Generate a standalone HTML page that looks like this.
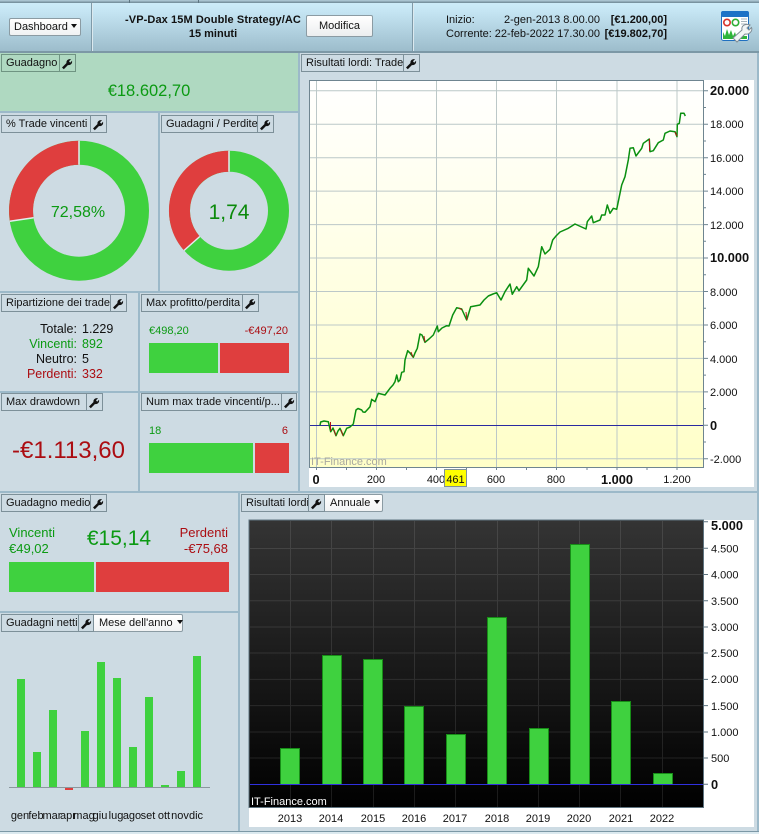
<!DOCTYPE html>
<html><head><meta charset="utf-8">
<style>
html,body{margin:0;padding:0}
body{width:759px;height:834px;overflow:hidden;position:relative;background:#cddbe3;font-family:"Liberation Sans",Arial,sans-serif;font-size:11px;color:#111}
.a{position:absolute;box-sizing:border-box}
.sep{position:absolute;background:#9cb9c9}
.tab{position:absolute;height:18px;display:flex;font-size:11px;line-height:16px;color:#111}
.tab b{font-weight:normal;display:block;border:1px solid #7d9099;padding:0 2px 0 4px;white-space:nowrap;box-sizing:border-box;height:18px;overflow:hidden}
.tab i{display:block;width:16px;height:18px;border:1px solid #7d9099;border-left:0;box-sizing:border-box;position:relative}
.tab i svg{position:absolute;left:1px;top:2px}
.dd{display:block;height:18px;box-sizing:border-box;border:1px solid #8b9ba3;border-left:0;border-radius:0 2px 2px 0;background:linear-gradient(#fff,#f1f3f4);padding:0 3px 0 5px;line-height:16px;white-space:nowrap}
.ar{display:inline-block;width:0;height:0;border:3.5px solid transparent;border-top:4px solid #111;border-bottom:0;margin-left:4px;vertical-align:2px}
.t{position:absolute;white-space:nowrap;line-height:16px;height:16px}
.g{color:#0b9a12}.r{color:#ab0d12}
svg text{font-family:"Liberation Sans",Arial,sans-serif;font-size:11px;fill:#111}
svg .b{font-weight:bold;font-size:12.800px}
</style></head><body>

<!-- top bar -->
<div class="a" style="left:0;top:0;width:759px;height:53px;background:linear-gradient(#d0eefb,#c6e6f4 20%,#9dbdcc);border-bottom:2px solid #7c98a6"></div>
<div class="a" style="left:0;top:0;width:759px;height:3px;background:linear-gradient(#b5cfdc,#6d8794)"></div>
<div class="a" style="left:129px;top:0;width:1px;height:3px;background:#5c7480"></div>
<div class="a" style="left:198px;top:0;width:1px;height:3px;background:#5c7480"></div>
<div class="a" style="left:91px;top:3px;width:2px;height:48px;background:#dbe9ef;border-left:1px solid #7f9aa8"></div>
<div class="a" style="left:412px;top:3px;width:2px;height:48px;background:#dbe9ef;border-left:1px solid #7f9aa8"></div>
<div class="a" style="left:9px;top:18px;width:72px;height:18px;border:1px solid #8b9ba3;border-radius:2px;background:linear-gradient(#fff,#f0f2f3);font-size:11px;line-height:16px;padding-left:4px;white-space:nowrap">Dashboard<span class="ar" style="margin-left:3px"></span></div>
<div class="t" style="left:100px;top:12px;width:226px;text-align:center;font-weight:bold;font-size:11px;letter-spacing:.1px">-VP-Dax 15M Double Strategy/AC</div>
<div class="t" style="left:100px;top:26px;width:226px;text-align:center;font-weight:bold;font-size:11px;">15 minuti</div>
<div class="a" style="left:306px;top:15px;width:67px;height:22px;border:1px solid #8b9ba3;border-radius:2px;background:linear-gradient(#fff,#eceeef);text-align:center;line-height:20px;font-size:11px">Modifica</div>
<div class="t" style="left:446px;top:12px;font-size:11px">Inizio:</div>
<div class="t" style="left:446px;top:26px;font-size:11px">Corrente:</div>
<div class="t" style="left:480px;width:120px;text-align:right;top:12px;font-size:11px">2-gen-2013 8.00.00</div>
<div class="t" style="left:480px;width:120px;text-align:right;top:26px;font-size:11px">22-feb-2022 17.30.00</div>
<div class="t" style="left:600px;width:67px;text-align:right;top:12px;font-size:11px;font-weight:bold">[€1.200,00]</div>
<div class="t" style="left:600px;width:67px;text-align:right;top:26px;font-size:11px;font-weight:bold">[€19.802,70]</div>
<svg class="a" style="left:720px;top:10px" width="34" height="33" viewBox="0 0 34 33">
<rect x="1.500" y="1.500" width="27" height="29" rx="2" fill="#fff" stroke="#1f6fc0"/>
<rect x="1" y="1" width="28" height="6" rx="2" fill="#1d72c6"/>
<circle cx="7" cy="12.500" r="3.200" fill="none" stroke="#d8342c" stroke-width="1.600"/>
<circle cx="15.500" cy="12.500" r="3.200" fill="none" stroke="#2fae35" stroke-width="1.600"/>
<path d="M21 9h6M21 11.500h6M21 14h6" stroke="#a8b4bc"/>
<path d="M3 29V22L5 26 7 19 9 25 11 20 13 26 15 22 17 29Z M21 29V26H27V29Z" fill="#2fb53a"/>
<path d="M13 28 L22 20 C21 16 25 13 30 15 L27 18 L29 20 L31.500 17.500 C33 21 29 25 25 24 L17 32 Z" fill="#f2f5f6" stroke="#7f8c94"/>
</svg>

<!-- panel backgrounds -->
<div class="a" style="left:0;top:53px;width:298px;height:58px;background:#afd9c1"></div>
<div class="sep" style="left:298px;top:53px;width:2px;height:438px"></div>
<div class="sep" style="left:0;top:111px;width:298px;height:2px"></div>
<div class="sep" style="left:158px;top:113px;width:2px;height:178px"></div>
<div class="sep" style="left:0;top:291px;width:298px;height:2px"></div>
<div class="sep" style="left:138px;top:293px;width:2px;height:198px"></div>
<div class="sep" style="left:0;top:391px;width:298px;height:2px"></div>
<div class="sep" style="left:0;top:491px;width:759px;height:2px"></div>
<div class="sep" style="left:238px;top:493px;width:2px;height:338px"></div>
<div class="sep" style="left:0;top:611px;width:238px;height:2px"></div>
<div class="sep" style="left:757px;top:53px;width:2px;height:778px"></div>
<div class="a" style="left:0;top:831px;width:759px;height:1px;background:#7c98a6"></div>
<div class="a" style="left:0;top:832px;width:759px;height:2px;background:#dbe9ef"></div>

<!-- tabs -->
<div class="tab" style="left:1px;top:54px;"><b style="width:59px;border-color:#6f9482">Guadagno</b><i style="border-color:#6f9482"><svg width="12" height="13" viewBox="0 0 12 13"><path d="M1 10.500 L5.500 6 C5 3.800 7 1.500 10 2.200 L8 4.200 L9.200 5.800 L11 3.800 C11.700 6.800 9.300 8.500 7 8 L2.800 12.300 Z" fill="#111"/></svg></i></div>
<div class="tab" style="left:301px;top:54px;"><b style="width:103px">Risultati lordi: Trade</b><i><svg width="12" height="13" viewBox="0 0 12 13"><path d="M1 10.500 L5.500 6 C5 3.800 7 1.500 10 2.200 L8 4.200 L9.200 5.800 L11 3.800 C11.700 6.800 9.300 8.500 7 8 L2.800 12.300 Z" fill="#111"/></svg></i></div>
<div class="tab" style="left:1px;top:115px;"><b style="width:90px">% Trade vincenti</b><i><svg width="12" height="13" viewBox="0 0 12 13"><path d="M1 10.500 L5.500 6 C5 3.800 7 1.500 10 2.200 L8 4.200 L9.200 5.800 L11 3.800 C11.700 6.800 9.300 8.500 7 8 L2.800 12.300 Z" fill="#111"/></svg></i></div>
<div class="tab" style="left:161px;top:115px;"><b style="width:97px">Guadagni / Perdite</b><i><svg width="12" height="13" viewBox="0 0 12 13"><path d="M1 10.500 L5.500 6 C5 3.800 7 1.500 10 2.200 L8 4.200 L9.200 5.800 L11 3.800 C11.700 6.800 9.300 8.500 7 8 L2.800 12.300 Z" fill="#111"/></svg></i></div>
<div class="tab" style="left:1px;top:294px;"><b style="width:110px">Ripartizione dei trade</b><i><svg width="12" height="13" viewBox="0 0 12 13"><path d="M1 10.500 L5.500 6 C5 3.800 7 1.500 10 2.200 L8 4.200 L9.200 5.800 L11 3.800 C11.700 6.800 9.300 8.500 7 8 L2.800 12.300 Z" fill="#111"/></svg></i></div>
<div class="tab" style="left:141px;top:294px;"><b style="width:102px">Max profitto/perdita</b><i><svg width="12" height="13" viewBox="0 0 12 13"><path d="M1 10.500 L5.500 6 C5 3.800 7 1.500 10 2.200 L8 4.200 L9.200 5.800 L11 3.800 C11.700 6.800 9.300 8.500 7 8 L2.800 12.300 Z" fill="#111"/></svg></i></div>
<div class="tab" style="left:1px;top:393px;"><b style="width:86px">Max drawdown</b><i><svg width="12" height="13" viewBox="0 0 12 13"><path d="M1 10.500 L5.500 6 C5 3.800 7 1.500 10 2.200 L8 4.200 L9.200 5.800 L11 3.800 C11.700 6.800 9.300 8.500 7 8 L2.800 12.300 Z" fill="#111"/></svg></i></div>
<div class="tab" style="left:141px;top:393px;"><b style="width:141px">Num max trade vincenti/p...</b><i style="width:15px"><svg width="12" height="13" viewBox="0 0 12 13"><path d="M1 10.500 L5.500 6 C5 3.800 7 1.500 10 2.200 L8 4.200 L9.200 5.800 L11 3.800 C11.700 6.800 9.300 8.500 7 8 L2.800 12.300 Z" fill="#111"/></svg></i></div>
<div class="tab" style="left:1px;top:494px;"><b style="width:90px">Guadagno medio</b><i><svg width="12" height="13" viewBox="0 0 12 13"><path d="M1 10.500 L5.500 6 C5 3.800 7 1.500 10 2.200 L8 4.200 L9.200 5.800 L11 3.800 C11.700 6.800 9.300 8.500 7 8 L2.800 12.300 Z" fill="#111"/></svg></i></div>
<div class="tab" style="left:241px;top:494px;"><b style="width:68px">Risultati lordi</b><i><svg width="12" height="13" viewBox="0 0 12 13"><path d="M1 10.500 L5.500 6 C5 3.800 7 1.500 10 2.200 L8 4.200 L9.200 5.800 L11 3.800 C11.700 6.800 9.300 8.500 7 8 L2.800 12.300 Z" fill="#111"/></svg></i><span class="dd" style="width:58px">Annuale<span class="ar"></span></span></div>
<div class="tab" style="left:1px;top:614px;"><b style="width:78px">Guadagni netti</b><i style="width:15px"><svg width="12" height="13" viewBox="0 0 12 13"><path d="M1 10.500 L5.500 6 C5 3.800 7 1.500 10 2.200 L8 4.200 L9.200 5.800 L11 3.800 C11.700 6.800 9.300 8.500 7 8 L2.800 12.300 Z" fill="#111"/></svg></i><span class="dd" style="width:89px">Mese dell'anno<span class="ar"></span></span></div>

<!-- values -->
<div class="t g" style="left:0;width:298px;text-align:center;top:81px;height:20px;line-height:20px;font-size:16.500px">€18.602,70</div>
<div class="t" style="left:7px;width:70px;text-align:right;top:321px;font-size:12.500px">Totale:</div>
<div class="t g" style="left:7px;width:70px;text-align:right;top:336px;font-size:12.500px">Vincenti:</div>
<div class="t" style="left:7px;width:70px;text-align:right;top:351px;font-size:12.500px">Neutro:</div>
<div class="t r" style="left:7px;width:70px;text-align:right;top:366px;font-size:12.500px">Perdenti:</div>
<div class="t" style="left:82px;top:321px;font-size:12.500px">1.229</div>
<div class="t g" style="left:82px;top:336px;font-size:12.500px">892</div>
<div class="t" style="left:82px;top:351px;font-size:12.500px">5</div>
<div class="t r" style="left:82px;top:366px;font-size:12.500px">332</div>
<div class="t g" style="left:149px;top:323px;font-size:11px">€498,20</div>
<div class="t r" style="left:200px;width:88px;text-align:right;top:323px;font-size:11px">-€497,20</div>
<div class="a" style="left:149px;top:343px;width:69px;height:30px;background:#3fd13f"></div>
<div class="a" style="left:220px;top:343px;width:69px;height:30px;background:#df3e3e"></div>
<div class="t r" style="left:12px;top:437px;height:28px;line-height:28px;font-size:24px">-€1.113,60</div>
<div class="t g" style="left:149px;top:423px;font-size:11px">18</div>
<div class="t r" style="left:200px;width:88px;text-align:right;top:423px;font-size:11px">6</div>
<div class="a" style="left:149px;top:443px;width:104px;height:30px;background:#3fd13f"></div>
<div class="a" style="left:255px;top:443px;width:34px;height:30px;background:#df3e3e"></div>
<div class="t g" style="left:9px;top:525px;font-size:13px">Vincenti</div>
<div class="t g" style="left:9px;top:541px;font-size:13px">€49,02</div>
<div class="t g" style="left:60px;width:118px;text-align:center;top:527px;height:24px;line-height:24px;font-size:21px">€15,14</div>
<div class="t r" style="left:130px;width:98px;text-align:right;top:525px;font-size:13px">Perdenti</div>
<div class="t r" style="left:130px;width:98px;text-align:right;top:541px;font-size:13px">-€75,68</div>
<div class="a" style="left:9px;top:562px;width:85px;height:30px;background:#3fd13f"></div>
<div class="a" style="left:96px;top:562px;width:133px;height:30px;background:#df3e3e"></div>

<!-- white chart containers -->
<div class="a" style="left:309px;top:80px;width:445px;height:407px;background:#fff"></div>
<div class="a" style="left:249px;top:520px;width:505px;height:307px;background:#fff"></div>

<svg class="a" style="left:0;top:0" width="759" height="834" viewBox="0 0 759 834">
<defs>
<linearGradient id="p1" x1="0" y1="0" x2="0" y2="1"><stop offset="0" stop-color="#fff"/><stop offset="1" stop-color="#ffffc8"/></linearGradient>
<linearGradient id="p2" x1="0" y1="0" x2="0" y2="1"><stop offset="0" stop-color="#343434"/><stop offset="1" stop-color="#000"/></linearGradient>
</defs>

<!-- donuts -->
<g fill="none" stroke-width="24">
<circle cx="79" cy="210.700" r="58" stroke="#3fd13f"/>
<path d="M79 152.700 A58 58 0 0 0 21.700 219.500" stroke="#df3e3e"/>
</g>
<path d="M79 140.700V164.700M9.800 221.300L33.500 217.700" stroke="#e3ecef" stroke-width="1.500"/>
<text x="78" y="217" text-anchor="middle" style="font-size:16px;fill:#0b9a12">72,58%</text>
<g fill="none" stroke-width="21">
<circle cx="229" cy="210.700" r="49.500" stroke="#3fd13f"/>
<path d="M229 161.200 A49.500 49.500 0 0 0 191.900 243.500" stroke="#df3e3e"/>
</g>
<path d="M229 150.700V171.700M184 250.500L199.800 236.500" stroke="#e3ecef" stroke-width="1.500"/>
<text x="229" y="219" text-anchor="middle" style="font-size:21px;fill:#0b8a0b">1,74</text>

<!-- main chart -->
<rect x="309.500" y="80.500" width="394" height="387" fill="url(#p1)" stroke="#6f8590"/>
<path d="M310 90.800H703M310 124.200H703M310 157.700H703M310 191.100H703M310 224.600H703M310 258H703M310 291.500H703M310 325H703M310 358.400H703M310 391.900H703M310 458.800H703M316.500 81V467M376.500 81V467M436.500 81V467M496.500 81V467M556.500 81V467M617 81V467M677 81V467" stroke="#bcc8c8" fill="none"/>
<path d="M310 425.500H703" stroke="#2a2aa0" stroke-width="1"/>
<path d="M703 90.800h5M703 124.200h5M703 157.700h5M703 191.100h5M703 224.600h5M703 258h5M703 291.500h5M703 325h5M703 358.400h5M703 391.900h5M703 425.300h5M703 458.800h5M703 107.500h3M703 141h3M703 174.400h3M703 207.800h3M703 241.300h3M703 274.800h3M703 308.200h3M703 341.700h3M703 375.100h3M703 408.600h3M703 442h3M316.500 467v3M346.500 467v3M376.500 467v3M406.500 467v3M436.500 467v3M466.500 467v3M496.500 467v3M526.500 467v3M556.500 467v3M587 467v3M617 467v3M647 467v3M677 467v3" stroke="#6f8590" fill="none"/>
<polyline fill="none" stroke="#0a8f10" stroke-width="1.500" stroke-linejoin="round" points="320,425.300 320.700,422 324,421 328.300,421.700 330.700,431.700 333,428 336,435.700 338,431 340,428.300 343.300,435.700 346.700,428.300 350,427 353.300,424 356,410 358,408.500 361.700,410 363,412 365,412.300 368,409 370,406.700 371.700,399.300 375,401.700 378.300,393.300 381,394 385,395 388,391 390,388.300 393,385 395,381.700 396.700,375 398.300,381.700 400,380 401.700,372.300 404,371.700 405,360 407.700,350.700 410,353 413.300,357.300 415,353 417.300,348.300 420,334 422,335 425,342.300 429,339 433.300,335 437.300,326 438.300,331.700 442,328 446.700,325.700 449,326 452.700,315 456.700,307.700 461.700,309 466.700,320 470.700,306.700 480,305 484,300 488.300,296 493,294 496.700,292.700 501,300 505,291.700 510,284 512.300,294.300 516.700,286.700 519,290.700 526.700,280 528.300,268.300 534,276 538.300,266.700 541.700,246.700 545,254 550,249.300 552.700,240 556,236 560,232 568.300,228.300 575,224 586,229 587.300,221.700 591.700,216 593.300,222.700 600,220 601.700,215 605,215 607.300,205 610,213.300 613.300,208.300 616.700,209.300 619.300,196.700 621.700,185 625,176.700 628.300,160 630,148.300 633.300,147.700 636,156 641.700,148.300 643.300,143.300 649.300,139 650,151.700 653.300,150.700 658.300,142.700 663.300,140 665,133.300 670,131 675,131.700 677,136.700 677.300,124.300 679.300,123.300 680.700,113.300 684,113.300 685.300,116"/>
<path d="M330.500 422V431M336 435.500L334 430M343 435.500L341 430M466 312L467 320M413 357L411 352M649.500 139V151M677 136L675 132M425 342L424 336M459 308L462 310" stroke="#b01515" stroke-width="1" fill="none"/>
<text x="311" y="465" style="fill:#a9a9a0">IT-Finance.com</text>
<g>
<text x="710" y="95" class="b">20.000</text><text x="710" y="128">18.000</text><text x="710" y="162">16.000</text><text x="710" y="195">14.000</text><text x="710" y="229">12.000</text><text x="710" y="262" class="b">10.000</text><text x="710" y="296">8.000</text><text x="710" y="329">6.000</text><text x="710" y="363">4.000</text><text x="710" y="396">2.000</text><text x="710" y="430" class="b">0</text><text x="710" y="463">-2.000</text>
</g>
<g text-anchor="middle">
<text x="316" y="484" class="b">0</text><text x="376" y="483">200</text><text x="436" y="483">400</text><text x="496" y="483">600</text><text x="556" y="483">800</text><text x="617" y="484" class="b">1.000</text><text x="677" y="483">1.200</text>
</g>
<rect x="444.500" y="469.500" width="22" height="17" fill="#ffff00" stroke="#7d9099"/>
<text x="455.500" y="483" text-anchor="middle">461</text>

<!-- bottom chart -->
<rect x="249" y="520" width="454.500" height="287.500" fill="url(#p2)" stroke="#5f7480"/>
<path d="M250 548.500H703M250 574.500H703M250 600.700H703M250 627H703M250 653H703M250 679.400H703M250 705.600H703M250 732H703M250 758H703M290.500 521V807M331.500 521V807M373.500 521V807M414.500 521V807M455.500 521V807M497.500 521V807M538.500 521V807M579.500 521V807M620.500 521V807M662.500 521V807" stroke="#fff" stroke-opacity=".1"/>
<g fill="#3fd13f" stroke="#178d17">
<rect x="280.500" y="748.500" width="19" height="36"/>
<rect x="322.500" y="655.500" width="19" height="129"/>
<rect x="363.500" y="659.500" width="19" height="125"/>
<rect x="404.500" y="706.500" width="19" height="78"/>
<rect x="446.500" y="734.500" width="19" height="50"/>
<rect x="487.500" y="617.500" width="19" height="167"/>
<rect x="529.500" y="728.500" width="19" height="56"/>
<rect x="570.500" y="544.500" width="19" height="240"/>
<rect x="611.500" y="701.500" width="19" height="83"/>
<rect x="653.500" y="773.500" width="19" height="11"/>
</g>
<path d="M250 784.500H703" stroke="#3030e0"/>
<path d="M703 521.700h5M703 548.300h5M703 574.500h5M703 600.700h5M703 627h5M703 653h5M703 679.400h5M703 705.600h5M703 732h5M703 758h5M703 784.300h5" stroke="#5f7480"/>
<g>
<text x="711" y="530" class="b">5.000</text><text x="711" y="552.500">4.500</text><text x="711" y="578.500">4.000</text><text x="711" y="605">3.500</text><text x="711" y="631">3.000</text><text x="711" y="657">2.500</text><text x="711" y="683">2.000</text><text x="711" y="710">1.500</text><text x="711" y="736">1.000</text><text x="711" y="762">500</text><text x="711" y="789" class="b">0</text>
</g>
<text x="251" y="805" style="fill:#fff">IT-Finance.com</text>
<g text-anchor="middle">
<text x="290" y="822">2013</text><text x="331" y="822">2014</text><text x="373" y="822">2015</text><text x="414" y="822">2016</text><text x="455" y="822">2017</text><text x="497" y="822">2018</text><text x="538" y="822">2019</text><text x="579" y="822">2020</text><text x="621" y="822">2021</text><text x="662" y="822">2022</text>
</g>

<!-- monthly bars -->
<g fill="#3fd13f">
<rect x="17" y="679" width="8" height="108"/><rect x="33" y="752" width="8" height="35"/><rect x="49" y="710" width="8" height="77"/><rect x="81" y="731" width="8" height="56"/><rect x="97" y="662" width="8" height="125"/><rect x="113" y="678" width="8" height="109"/><rect x="129" y="747" width="8" height="40"/><rect x="145" y="697" width="8" height="90"/><rect x="161" y="785" width="8" height="2"/><rect x="177" y="771" width="8" height="16"/><rect x="193" y="656" width="8" height="131"/>
</g>
<rect x="65" y="787" width="8" height="3" fill="#df3e3e"/>
<path d="M9 787.500H210" stroke="#8b979d"/>
<g text-anchor="middle">
<text x="20" y="819">gen</text><text x="36" y="819">feb</text><text x="52" y="819">mar</text><text x="68" y="819">apr</text><text x="84" y="819">mag</text><text x="100" y="819">giu</text><text x="116" y="819">lug</text><text x="132" y="819">ago</text><text x="148" y="819">set</text><text x="164" y="819">ott</text><text x="180" y="819">nov</text><text x="196" y="819">dic</text>
</g>
</svg>
</body></html>
